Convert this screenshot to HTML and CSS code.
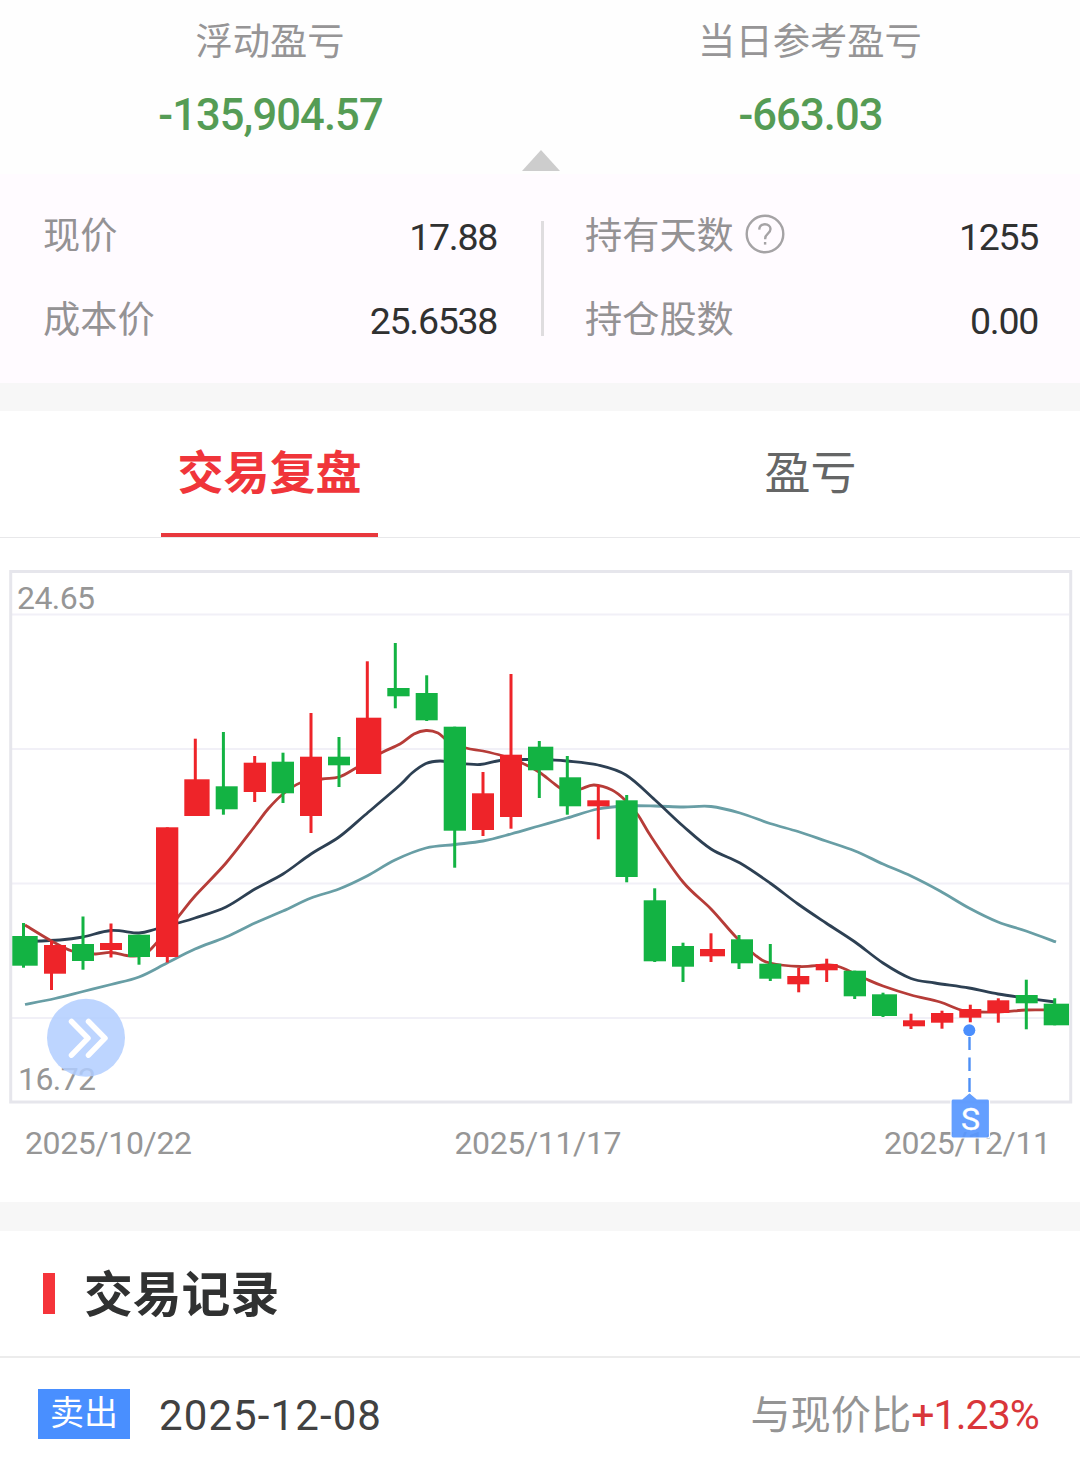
FILE: index.html
```html
<!DOCTYPE html>
<html lang="zh-CN">
<head>
    <meta charset="UTF-8">
    <meta name="viewport" content="width=device-width, initial-scale=1.0">
    <title>交易复盘</title>
    <link rel="stylesheet" href="styles.css">
</head>
<body>
    <section class="summary">
        <div class="summary-item">
            <div class="summary-label">浮动盈亏</div>
            <div class="summary-value">-135,904.57</div>
        </div>
        <div class="summary-item">
            <div class="summary-label">当日参考盈亏</div>
            <div class="summary-value">-663.03</div>
        </div>
        <span class="collapse-arrow"></span>
    </section>

    <section class="detail">
        <div class="detail-col">
            <div class="detail-row"><span class="label">现价</span><span class="num">17.88</span></div>
            <div class="detail-row"><span class="label">成本价</span><span class="num">25.6538</span></div>
        </div>
        <div class="detail-divider"></div>
        <div class="detail-col">
            <div class="detail-row">
                <span class="label">持有天数
                    <svg class="help" viewBox="0 0 40 40">
                        <circle cx="20" cy="20" r="18.3"/>
                        <path d="M14.2 15.6c.2-3.6 2.6-5.3 5.7-5.3 3.3 0 5.6 1.9 5.6 4.8 0 4.5-5.3 4.7-5.3 9.3v.8"/>
                        <path d="M20.1 28v2.6"/>
                    </svg>
                </span>
                <span class="num">1255</span>
            </div>
            <div class="detail-row"><span class="label">持仓股数</span><span class="num">0.00</span></div>
        </div>
    </section>

    <nav class="tabs">
        <div class="tab active"><span>交易复盘</span></div>
        <div class="tab"><span>盈亏</span></div>
    </nav>

    <section class="chart-box">
        <svg id="kline" class="kline" viewBox="0 538 1080 664">
            <g class="grid">
                <path d="M12 614.5H1069M12 749H1069M12 883.5H1069M12 1018H1069"/>
            </g>
            <rect class="frame" x="10.7" y="571.5" width="1060" height="530.5"/>
            <g id="lines"></g>
            <g id="candles"></g>
            <text class="axis" x="17" y="608.5" textLength="78">24.65</text>
            <text class="axis" x="18" y="1089.5" textLength="78">16.72</text>
            <text class="axis" x="25" y="1153.5" textLength="167">2025/10/22</text>
            <text class="axis" x="454.5" y="1153.5" textLength="167">2025/11/17</text>
            <text class="axis" x="884" y="1153.5" textLength="167">2025/12/11</text>
            <g class="expand">
                <circle cx="86" cy="1037.7" r="39"/>
                <path d="M71.5 1021.5l16.5 16.7-16.5 17M88.5 1021.5l16.5 16.7-16.5 17"/>
            </g>
            <!-- 卖出标记 -->
            <g class="sell-mark">
                <path class="dash" d="M969.5 1037v13M969.5 1057.5v13.5M969.5 1078v14"/>
                <circle cx="969.3" cy="1030.3" r="6"/>
                <path class="flag" d="M953 1099h9l7.5-6.5 7.5 6.5h10.5q2 0 2 2v35q0 2-2 2h-34.5q-2 0-2-2v-35q0-2 2-2z"/>
                <text x="970.5" y="1130">S</text>
            </g>
        </svg>
    </section>

    <section class="records">
        <h2 class="records-title"><span>交易记录</span></h2>
        <div class="record">
            <span class="tag">卖出</span>
            <span class="record-date">2025-12-08</span>
            <span class="record-diff">与现价比<em>+1.23%</em></span>
        </div>
    </section>

    <script src="chart.js"></script>
</body>
</html>
```
FILE: styles.css
```css
* {
    box-sizing: border-box;
}
body {
    margin: 0;
    width: 1080px;
    height: 1467px;
    overflow: hidden;
    background: #fff;
    color: #303131;
    font-family: Roboto, "Noto Sans CJK SC", sans-serif;
}

/* 顶部盈亏 */
.summary {
    position: relative;
    display: flex;
    height: 174px;
    padding-top: 14px;
    background: #fefefe;
}
.summary-item {
    flex: 1;
    text-align: center;
}
.summary-label {
    height: 56px;
    line-height: 56px;
    font-size: 37.3px;
    color: #969596;
}
.summary-value {
    margin-top: 18px;
    padding-left: 1px;
    line-height: 56px;
    font-size: 43.5px;
    font-weight: 500;
    letter-spacing: -0.9px;
    color: #559c55;
}
.collapse-arrow {
    position: absolute;
    left: 522px;
    bottom: 3px;
    border: solid transparent;
    border-width: 0 19px 21px;
    border-bottom-color: #cdcdcd;
}

/* 持仓明细 */
.detail {
    display: flex;
    height: 209px;
    padding: 18px 42px 0 43px;
    background: #fffbff;
}
.detail-col {
    width: 454px;
}
.detail-col:last-child {
    flex: 1;
}
.detail-divider {
    width: 3px;
    height: 115px;
    margin: 29px 41px 0 44px;
    background: #dfdddf;
}
.detail-row {
    display: flex;
    justify-content: space-between;
    align-items: center;
    height: 84px;
}
.label {
    display: flex;
    align-items: center;
    padding-top: 4px;
    font-size: 37.2px;
    line-height: 56px;
    color: #949294;
}
.num {
    padding-top: 5px;
    font-size: 37.5px;
    letter-spacing: -1.3px;
}
.help {
    width: 40px;
    height: 40px;
    margin: -4px 0 0 11.5px;
    fill: none;
    stroke: #a5a3a5;
    stroke-width: 2.4;
}

/* 页签 */
.tabs {
    display: flex;
    height: 155px;
    border-top: 28px solid #f7f7f7;
    border-bottom: 1.5px solid #e8e8ea;
}
.tab {
    flex: 1;
    display: flex;
    justify-content: center;
    padding-top: 2px;
    font-size: 46px;
    line-height: 120px;
    color: #656666;
}
.tab:last-child {
    padding-left: 2px;
}
.tab.active span {
    width: 217px;
    border-bottom: 4px solid #e8383d;
    text-align: center;
    font-weight: 700;
    color: #f0353a;
}

/* K线图 */
.kline {
    display: block;
    width: 1080px;
    height: 664px;
}
.frame {
    fill: none;
    stroke: #e6e6ec;
    stroke-width: 3;
}
.grid path {
    stroke: #f1f0f7;
    stroke-width: 2;
}
.axis {
    font-size: 32px;
    fill: #969696;
}
.ma {
    fill: none;
    stroke-width: 2.8;
}
.expand circle {
    fill: #b1ceff;
    opacity: 0.85;
}
.expand path {
    fill: none;
    stroke: #fff;
    stroke-width: 5.5;
    stroke-linecap: round;
    stroke-linejoin: round;
}
.sell-mark circle {
    fill: #4a8efd;
}
.sell-mark .dash {
    stroke: #4d8ff5;
    stroke-width: 2.4;
}
.sell-mark .flag {
    fill: #5797ff;
    fill-opacity: 0.92;
    stroke: #fff;
    stroke-width: 1.2;
}
.sell-mark text {
    font-size: 32px;
    text-anchor: middle;
    fill: #fff;
    stroke: #fff;
    stroke-width: 0.3;
}

/* 交易记录 */
.records {
    border-top: 29px solid #f7f7f7;
}
.records-title {
    display: flex;
    align-items: center;
    height: 127px;
    margin: 0;
    padding-left: 43px;
    border-bottom: 2px solid #ececec;
    font-size: 48.8px;
    font-weight: 700;
}
.records-title::before {
    content: "";
    width: 12px;
    height: 41px;
    margin-right: 29px;
    background: #f5343a;
}
.records-title span {
    padding-bottom: 7px;
}
.record {
    display: flex;
    align-items: center;
    height: 109px;
    padding: 2px 41px 0 38px;
}
.tag {
    width: 92px;
    height: 50px;
    margin-right: 29px;
    background: #498fff;
    color: #fff;
    font-size: 34px;
    line-height: 48px;
    text-align: center;
}
.record-date {
    padding-top: 3px;
    font-size: 42px;
    letter-spacing: 1.1px;
    color: #414141;
}
.record-diff {
    margin-left: auto;
    padding-bottom: 4px;
    font-size: 40.2px;
    color: #949494;
}
.record-diff em {
    font-style: normal;
    font-size: 41px;
    letter-spacing: -0.9px;
    color: #d9363a;
}
```
FILE: chart.js
```javascript
const UP = '#ee2429', DOWN = '#13b343';

// [涨跌, 实体x, 宽, 实体上, 实体下, 影线x, 影线上, 影线下]
const candles = [
    [0, 12.3, 25.4, 936, 965.7, 23.5, 923, 967.7],
    [1, 44, 22, 945, 973.7, 51.5, 941, 990],
    [0, 72, 22, 944, 961, 83, 916.5, 969.7],
    [1, 100, 22, 943, 950, 111, 923.5, 957.5],
    [0, 128, 22, 934.7, 957, 139, 934.7, 964.7],
    [1, 156, 22.3, 827.3, 957, 167.3, 827.3, 962.5],
    [1, 184.3, 25.3, 779.3, 816, 195.3, 738.7, 816],
    [0, 215.7, 22, 786.3, 809.3, 223.4, 732, 814.7],
    [1, 243.7, 22.3, 762.7, 792, 254.7, 756, 802],
    [0, 271.7, 22.3, 761.7, 793.3, 283, 752.7, 803],
    [1, 300, 22, 756.7, 816, 311, 713, 833],
    [0, 328, 22, 756.7, 765.3, 339, 737, 787],
    [1, 356, 25.3, 717.7, 774, 367.3, 661.3, 774],
    [0, 387.3, 22.3, 688, 696.3, 395.3, 643, 708.3],
    [0, 415.7, 22, 693, 720.3, 426.7, 675.3, 721],
    [0, 443.7, 22.3, 726.7, 830.7, 454.7, 726.7, 867.7],
    [1, 472, 22, 793.3, 830, 483, 772, 836],
    [1, 500, 22, 754.7, 817, 511, 674, 828.7],
    [0, 528, 25.3, 746.7, 770.3, 539.3, 741, 798],
    [0, 559.3, 21.8, 777.3, 806.3, 567.3, 756, 814.7],
    [1, 587.3, 22.3, 800.3, 806.3, 598.3, 785, 839.3],
    [0, 615.7, 22, 800.3, 877, 626.7, 795, 882.3],
    [0, 643.7, 22.3, 900.3, 961.3, 654.7, 888.3, 962],
    [0, 672, 22, 946, 966.7, 683, 942.7, 982],
    [1, 700, 25, 949, 956.3, 711, 933.3, 962],
    [0, 731, 22, 939.3, 963.3, 739, 935, 969],
    [0, 759.3, 22, 963.7, 978.7, 770.3, 944, 981],
    [1, 787.3, 22, 976, 984.3, 798.7, 968, 992.3],
    [1, 815.7, 22, 964, 970.3, 826.7, 958.7, 982],
    [0, 843.7, 22.3, 970.7, 996.3, 854.7, 970.7, 999],
    [0, 872, 25, 994.3, 1016, 883, 992.7, 1017],
    [1, 903, 22, 1020.3, 1026.3, 911, 1013.7, 1029],
    [1, 931, 22.3, 1013, 1022.7, 942, 1010.7, 1028.7],
    [1, 959.3, 22, 1009, 1017.7, 970.3, 1004.7, 1022.3],
    [1, 987.3, 22, 1000.3, 1013, 998.3, 998.3, 1022.7],
    [0, 1015.7, 22, 995, 1003.3, 1026.3, 979.7, 1029.3],
    [0, 1043.7, 25.3, 1003.7, 1025.3, 1054.7, 998.3, 1025.3]
];

const averages = [
    { color: '#689ea5', points: [[25,1004.5],[55,998.5],[83,991.5],[111,984.5],[139,977],[167,963],[195,949],[226,937],[255,923],[283,911],[311,898],[339,889],[367,876],[395,860],[426,848],[455,844.5],[483,841],[511,834],[539,826],[567,818],[598,809],[626,806],[655,806],[683,807],[711,806.5],[740,813],[770,823.5],[798,831.5],[826,841],[855,851],[883,864],[911,876],[940,891],[969,908],[998,922],[1026,931],[1056,942]] },
    { color: '#2d4053', points: [[25,941.5],[60,940],[83,937],[111,930.5],[139,933],[156,929],[178,923],[195,918],[226,907],[255,889],[283,874],[311,854],[339,837],[365,815],[400,785],[412,773],[426,763.5],[440,761],[455,763],[480,764.5],[500,760.5],[525,759.5],[553,760],[567,761],[598,765],[626,775],[655,800],[683,826],[711,849],[740,863],[770,883],[798,904],[826,923],[855,942],[883,963],[911,978.5],[935,983],[969,988],[998,994],[1026,998],[1055,1002]] },
    { color: '#b63c38', points: [[25,925],[51.5,941],[72,951],[95,954],[111,952.5],[130,956],[142,955],[152,948],[178,917],[195,896],[226,863],[255,826],[268,809],[283,794],[300,783],[322,779],[339,777],[356,768],[381,753],[400,744],[414,734],[426,730.5],[438,733],[448,741],[466,748],[483,751],[503,756],[522,763],[539,772],[552,782],[560,788],[570,792],[581,789],[594,785],[612,790],[625,800],[638,815],[652,838],[683,882],[711,909],[735,936],[755,955],[770,963],[800,966.5],[826,965],[840,967],[866,979],[883,986],[911,995],[940,1002],[965,1011],[998,1012],[1026,1010],[1050,1010]] }
];

// 平滑曲线
function smooth(p) {
    let d = `M${p[0]}`;
    for (let i = 0; i < p.length - 1; i++) {
        const a = p[i - 1] || p[i], b = p[i], c = p[i + 1], e = p[i + 2] || c;
        d += `C${b[0] + (c[0] - a[0]) / 6} ${b[1] + (c[1] - a[1]) / 6} ${c[0] - (e[0] - b[0]) / 6} ${c[1] - (e[1] - b[1]) / 6} ${c}`;
    }
    return d;
}

document.getElementById('lines').innerHTML = averages.map(m =>
    `<path class="ma" stroke="${m.color}" d="${smooth(m.points)}"/>`).join('');

document.getElementById('candles').innerHTML = candles.map(([up, x, w, top, bottom, wx, high, low]) =>
    `<g fill="${up ? UP : DOWN}"><rect x="${wx - 1.5}" y="${high}" width="3" height="${low - high}"/><rect x="${x}" y="${top}" width="${w}" height="${bottom - top}"/></g>`).join('');
```
